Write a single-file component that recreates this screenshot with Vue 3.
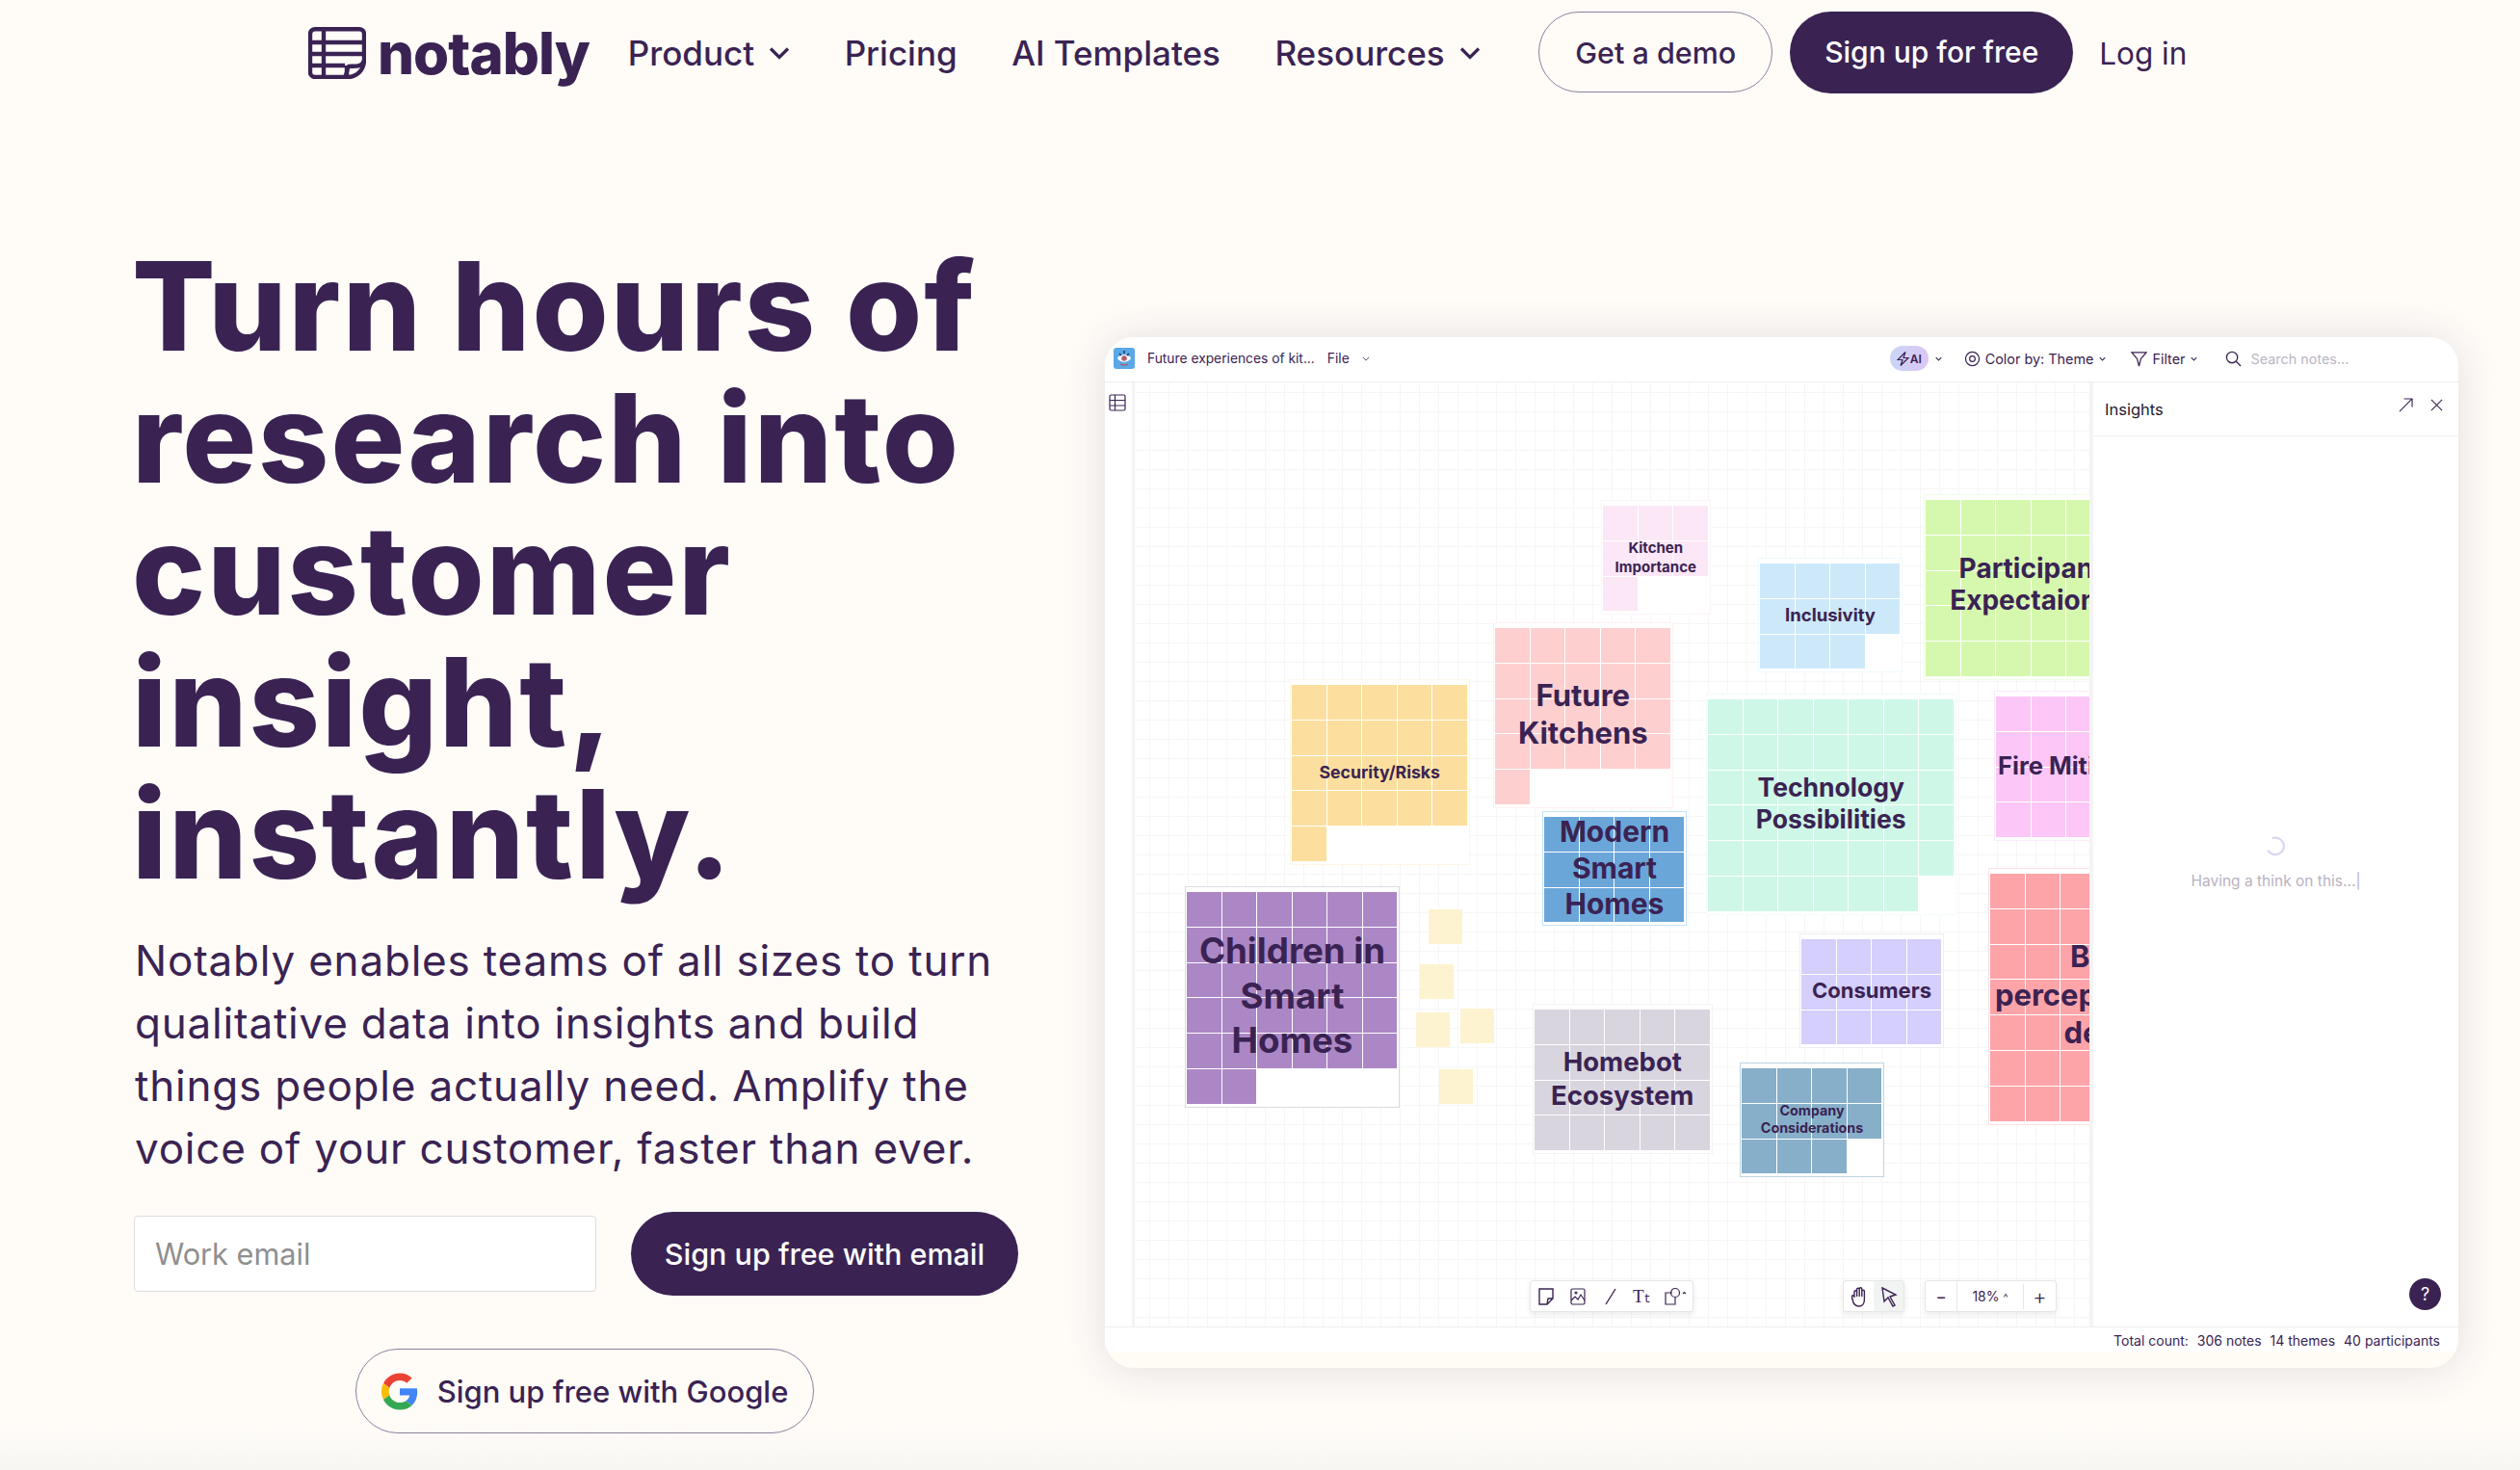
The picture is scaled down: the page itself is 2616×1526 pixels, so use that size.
<template>
  <div class="page">
    <header class="nav">
      <a class="logo">
        <svg class="logo-icon" viewBox="0 0 60 54" fill="none" stroke="#3a2353" stroke-width="4.4">
          <path d="M7 2.2h46a5 5 0 0 1 5 5v27c0 10-7 17.800-17 17.800H7a5 5 0 0 1-5-5V7.200a5 5 0 0 1 5-5z" />
          <path d="M2 16h56M2 28h56M2 40h36M16 2v50M40 40v12" />
          <path d="M38 52c3-4 2-10 4-11 4-1 13 2 16-6" />
        </svg>
        <span>notably</span>
      </a>
      <a class="link">Product
        <svg class="chev" viewBox="0 0 22 14" fill="none" stroke="#3a2353" stroke-width="3.2"><path d="M2 2.500l9 9 9-9" /></svg>
      </a>
      <a class="link">Pricing</a>
      <a class="link">AI Templates</a>
      <a class="link">Resources
        <svg class="chev" viewBox="0 0 22 14" fill="none" stroke="#3a2353" stroke-width="3.2"><path d="M2 2.500l9 9 9-9" /></svg>
      </a>
      <a class="btn-outline demo">Get a demo</a>
      <a class="btn-solid signup">Sign up for free</a>
      <a class="link login">Log in</a>
    </header>

    <main class="hero">
      <section class="copy">
        <h1>Turn hours of research into customer insight, instantly.</h1>
        <p>Notably enables teams of all sizes to turn qualitative data into insights and build things people actually need. Amplify the voice of your customer, faster than ever.</p>
        <div class="signup-row">
          <input class="email" placeholder="Work email" />
          <a class="btn-solid email-btn">Sign up free with email</a>
        </div>
        <a class="btn-outline google">
          <svg viewBox="0 0 48 48" class="g-logo">
            <path fill="#EA4335" d="M24 9.500c3.540 0 6.710 1.220 9.210 3.600l6.850-6.850C35.900 2.380 30.470 0 24 0 14.620 0 6.510 5.380 2.560 13.220l7.980 6.190C12.430 13.720 17.740 9.500 24 9.500z" />
            <path fill="#4285F4" d="M46.980 24.550c0-1.570-.15-3.090-.38-4.550H24v9.020h12.940c-.58 2.960-2.260 5.480-4.780 7.180l7.730 6c4.510-4.180 7.090-10.360 7.090-17.650z" />
            <path fill="#FBBC05" d="M10.530 28.590c-.48-1.450-.76-2.990-.76-4.590s.27-3.140.76-4.590l-7.980-6.190C.92 16.460 0 20.120 0 24c0 3.880.92 7.540 2.560 10.780l7.970-6.190z" />
            <path fill="#34A853" d="M24 48c6.480 0 11.930-2.130 15.890-5.810l-7.730-6c-2.150 1.450-4.920 2.300-8.160 2.300-6.260 0-11.570-4.220-13.470-9.910l-7.980 6.190C6.510 42.620 14.620 48 24 48z" />
          </svg>
          Sign up free with Google
        </a>
      </section>

      <section class="app">
        <div class="app-top">
          <svg class="file-icon" viewBox="0 0 22 22">
            <rect width="22" height="22" rx="3" fill="#5aa9e6" />
            <path d="M4 11c3-5 11-5 14 0-3 5-11 5-14 0z" fill="#fff" />
            <circle cx="11" cy="11" r="2.800" fill="#b45a6a" />
            <path d="M6 6l2 2M16 6l-2 2M11 3v3" stroke="#1f3a66" stroke-width="1.500" />
            <path d="M7 17q4 2 8 0" stroke="#c44" stroke-width="1.200" fill="none" />
          </svg>
          <span class="doc-title">Future experiences of kit...</span>
          <span class="doc-file">File</span>
          <svg class="mini-chev big" viewBox="0 0 10 6" fill="none" stroke="#3a2353" stroke-width="1"><path d="M1 1l4 4 4-4" /></svg>

          <span class="ai-pill">
            <svg viewBox="0 0 14 16" width="14" height="17" fill="none" stroke="#3a2353" stroke-width="1.200"><path d="M9 1L1 9h5l-2 6 8-8H7z" /></svg>
            AI
          </span>
          <svg class="mini-chev ai-chev" viewBox="0 0 10 6" fill="none" stroke="#3a2353" stroke-width="1.500"><path d="M1 1l4 4 4-4" /></svg>
          <svg class="tool-icon eye" viewBox="0 0 18 18" fill="none" stroke="#3a2353" stroke-width="1.300"><circle cx="9" cy="9" r="7.500" /><circle cx="9" cy="9" r="3" /></svg>
          <span class="tool-text">Color by: Theme</span>
          <svg class="mini-chev" viewBox="0 0 10 6" fill="none" stroke="#3a2353" stroke-width="1.500"><path d="M1 1l4 4 4-4" /></svg>
          <svg class="tool-icon funnel" viewBox="0 0 18 18" fill="none" stroke="#3a2353" stroke-width="1.300"><path d="M1 2h16l-6 7-2 8-2-8z" /></svg>
          <span class="tool-text">Filter</span>
          <svg class="mini-chev" viewBox="0 0 10 6" fill="none" stroke="#3a2353" stroke-width="1.500"><path d="M1 1l4 4 4-4" /></svg>
          <svg class="tool-icon search" viewBox="0 0 18 18" fill="none" stroke="#3a2353" stroke-width="1.400"><circle cx="7.500" cy="7.500" r="6" /><path d="M12 12l5 5" /></svg>
          <span class="search-text">Search notes...</span>
        </div>

        <div class="app-main">
          <aside class="side">
            <svg viewBox="0 0 18 18" fill="none" stroke="#3a2353" stroke-width="1.200"><rect x="1" y="1" width="16" height="16" rx="1.500" /><path d="M1 6.500h16M1 12h16M6.500 1v16" /></svg>
          </aside>

          <div class="board">
            <div
              v-for="c in clusters"
              :key="c.name"
              class="cluster"
              :style="{ left: c.x - 1178 + 'px', top: c.y - 396 + 'px', borderColor: c.line }"
            >
              <div class="cells" :style="{ gridTemplateColumns: `repeat(${c.cols}, 35.500px)` }">
                <i v-for="n in c.cols * (c.rows - 1) + c.last" :key="n" :style="{ background: c.color }"></i>
              </div>
              <div
                class="label"
                :style="{ top: c.textY - c.y + 'px', fontSize: c.size + 'px', lineHeight: c.lh + 'px' }"
              >
                <div v-for="l in c.lines" :key="l">{{ l }}</div>
              </div>
            </div>

            <i
              v-for="n in loose"
              :key="n.x"
              class="loose"
              :style="{ left: n.x - 1178 + 'px', top: n.y - 396 + 'px' }"
            ></i>

            <div class="float shapes">
              <svg viewBox="0 0 20 20" fill="none" stroke="#3a2353" stroke-width="1.400"><path d="M3 2h14v10l-6 6H3zM17 12h-5l-1 6" /></svg>
              <svg viewBox="0 0 20 20" fill="none" stroke="#3a2353" stroke-width="1.200"><rect x="3" y="2" width="14" height="16" rx="1.500" /><path d="M3 14l4-4 3 3 3-5 4 6" /><circle cx="8" cy="6" r="1" /></svg>
              <svg viewBox="0 0 20 20" fill="none" stroke="#3a2353" stroke-width="1.400"><path d="M5 18L15 2" /></svg>
              <span class="tt">T<small>t</small></span>
              <svg viewBox="0 0 24 20" fill="none" stroke="#3a2353" stroke-width="1.200"><path d="M9 6H2v12h10v-7" /><circle cx="12" cy="6" r="4.500" /><path d="M20 7l1.500-1.500L23 7" /></svg>
            </div>
            <div class="float modes">
              <span class="mode">
                <svg viewBox="0 0 20 22" fill="none" stroke="#3a2353" stroke-width="1.400"><path d="M5 12V6a1.300 1.300 0 0 1 2.600 0V3.500a1.300 1.300 0 0 1 2.600 0V3a1.300 1.300 0 0 1 2.600 0v2.500a1.300 1.300 0 0 1 2.600 0V14c0 4-2 7-5.500 7S4 19 3 14l-.5-3a1.200 1.200 0 0 1 2.500 0M7.600 6v5M10.200 3.500V11M12.800 5v6" /></svg>
              </span>
              <span class="mode on">
                <svg viewBox="0 0 20 22" fill="none" stroke="#3a2353" stroke-width="1.400"><path d="M3 2l14 7-6 2 5 9-2 1-5-9-4 4z" /></svg>
              </span>
            </div>
            <div class="float zoom">
              <span class="z-btn">−</span>
              <span class="z-val">18% <small>^</small></span>
              <span class="z-btn plus">+</span>
            </div>

            <svg class="pointer" viewBox="0 0 10 16"><path d="M1 1v12l3-3 2 5 2-1-2-5h4z" fill="#111" stroke="#fff" stroke-width=".6" /></svg>
          </div>

          <aside class="panel">
            <div class="panel-head">
              <span>Insights</span>
              <svg viewBox="0 0 16 16" fill="none" stroke="#3a2353" stroke-width="1.200"><path d="M1 15L15 1M6 1h9v9" /></svg>
              <svg viewBox="0 0 16 16" fill="none" stroke="#3a2353" stroke-width="1.200"><path d="M2 2l12 12M14 2L2 14" /></svg>
            </div>
            <div class="thinking">
              <svg viewBox="0 0 20 20" width="22" height="22" fill="none" stroke="#d9d4f2" stroke-width="2"><path d="M6 3a8 8 0 1 1-4 11" /></svg>
              <span>Having a think on this...|</span>
            </div>
            <span class="help">?</span>
          </aside>
        </div>

        <div class="app-foot">
          <span>Total count:</span><span>306 notes</span><span>14 themes</span><span>40 participants</span>
        </div>
      </section>
    </main>
  </div>
</template>

<script setup>
const clusters = [
  { name: 'kitchen', x: 1662, y: 518, cols: 3, rows: 3, last: 1, color: '#fce7f6', line: '#fdf5fb', lines: ['Kitchen', 'Importance'], size: 15, lh: 19.5, textY: 576 },
  { name: 'inclusivity', x: 1825, y: 578, cols: 4, rows: 3, last: 3, color: '#cde9f9', line: '#f0faff', lines: ['Inclusivity'], size: 18.5, lh: 22, textY: 636 },
  { name: 'participants', x: 1997, y: 512, cols: 6, rows: 5, last: 6, color: '#d5f8ae', line: '#f1fde2', lines: ['Participant', 'Expectaions'], size: 28, lh: 33, textY: 605 },
  { name: 'future', x: 1550, y: 645, cols: 5, rows: 5, last: 1, color: '#fecfcf', line: '#fff0f0', lines: ['Future', 'Kitchens'], size: 31, lh: 39, textY: 739 },
  { name: 'security', x: 1339, y: 704, cols: 5, rows: 5, last: 1, color: '#fcdf9e', line: '#fef7e6', lines: ['Security/Risks'], size: 17.7, lh: 24, textY: 800 },
  { name: 'technology', x: 1771, y: 719, cols: 7, rows: 6, last: 6, color: '#cff7e8', line: '#f1fdf9', lines: ['Technology', 'Possibilities'], size: 26.5, lh: 33, textY: 832 },
  { name: 'fire', x: 2070, y: 716, cols: 5, rows: 4, last: 5, color: '#fcc7f7', line: '#fdeafb', lines: ['Fire Mitigation'], size: 25.5, lh: 32, textY: 793 },
  { name: 'modern', x: 1601, y: 841, cols: 4, rows: 3, last: 4, color: '#6ba6d9', line: '#c4e2f7', lines: ['Modern', 'Smart', 'Homes'], size: 30, lh: 37.5, textY: 899 },
  { name: 'brand', x: 2064, y: 900, cols: 7, rows: 7, last: 7, color: '#fda4a9', line: '#fddfe1', lines: ['Brand', 'perceptions and', 'design'], size: 31, lh: 39.5, textY: 1030 },
  { name: 'children', x: 1230, y: 919, cols: 6, rows: 6, last: 2, color: '#ac87c5', line: '#dcdae2', lines: ['Children in', 'Smart', 'Homes'], size: 36.7, lh: 46.5, textY: 1032 },
  { name: 'consumers', x: 1868, y: 968, cols: 4, rows: 3, last: 4, color: '#d4cffc', line: '#eeedf3', lines: ['Consumers'], size: 22, lh: 30, textY: 1026 },
  { name: 'homebot', x: 1591, y: 1041, cols: 5, rows: 4, last: 5, color: '#d8d5df', line: '#f3f2f5', lines: ['Homebot', 'Ecosystem'], size: 27.5, lh: 34.5, textY: 1117 },
  { name: 'company', x: 1806, y: 1102, cols: 4, rows: 3, last: 3, color: '#87afc9', line: '#bed4e2', lines: ['Company', 'Considerations'], size: 14.3, lh: 18, textY: 1160 }
]

const loose = [
  { x: 1483, y: 943 },
  { x: 1474, y: 1000 },
  { x: 1470, y: 1050 },
  { x: 1516, y: 1046 },
  { x: 1494, y: 1109 }
]
</script>

<style scoped>
.page {
  position: relative;
  width: 2616px;
  height: 1526px;
  overflow: hidden;
  background: linear-gradient(#fffcf8 0, #fffcf8 1478px, #f8f6f3 1526px);
  color: #3a2353;
  font-family: Inter, "Liberation Sans", sans-serif;
}
.nav {
  display: flex;
  align-items: center;
  height: 110px;
  padding: 0 0 0 320px;
  box-sizing: border-box;
}
.logo {
  display: flex;
  align-items: center;
  gap: 12px;
  margin-right: 40px;
  font-size: 60px;
  font-weight: 800;
  letter-spacing: -1px;
}
.logo-icon {
  width: 60px;
  height: 54px;
}
.link {
  display: flex;
  align-items: center;
  margin-right: 56.500px;
  font-size: 35px;
  font-weight: 500;
}
.chev {
  width: 22px;
  height: 14px;
  margin-left: 15px;
}
.btn-outline,
.btn-solid {
  display: flex;
  align-items: center;
  justify-content: center;
  box-sizing: border-box;
  border-radius: 50px;
  font-size: 30.500px;
  font-weight: 500;
}
.btn-outline {
  border: 1.500px solid #8d7f9b;
}
.btn-solid {
  background: #3a2353;
  color: #fff;
}
.demo {
  width: 243px;
  height: 84px;
  margin: -2px 0 0 4px;
}
.signup {
  width: 294px;
  height: 85px;
  margin: -2px 0 0 18px;
  font-size: 30px;
}
.login {
  margin: 0 0 0 27px;
  font-size: 31.500px;
  font-weight: 400;
}
.hero {
  display: flex;
}
.copy {
  display: flex;
  flex-direction: column;
  box-sizing: border-box;
  width: 1074px;
  padding: 139px 0 0 137px;
}
h1 {
  margin: 0 0 31px;
  font-size: 128px;
  line-height: 137px;
  font-weight: 800;
  letter-spacing: 2px;
}
p {
  margin: 0 0 33px 3px;
  width: 930px;
  font-size: 44px;
  line-height: 65px;
  letter-spacing: 0.8px;
}
.signup-row {
  display: flex;
  align-items: center;
  gap: 36px;
  margin-left: 2px;
}
.email {
  box-sizing: border-box;
  width: 480px;
  height: 79px;
  padding: 0 21px;
  border: 1.500px solid #ddd;
  border-radius: 4px;
  background: #fff;
  font: 400 30.700px Inter, "Liberation Sans", sans-serif;
}
.email::placeholder {
  color: #8f8f8f;
}
.email-btn {
  width: 402px;
  height: 87px;
}
.google {
  align-self: center;
  gap: 20px;
  width: 476px;
  height: 88px;
  margin-top: 55px;
  margin-left: 3px;
  font-size: 31px;
}
.g-logo {
  width: 38px;
  height: 41px;
}
.app {
  display: flex;
  flex-direction: column;
  box-sizing: border-box;
  width: 1405px;
  height: 1070px;
  margin: 240px 0 0 73px;
  border-radius: 30px;
  overflow: hidden;
  background: #fffcf6;
  box-shadow: 0 2px 44px rgba(60, 35, 60, 0.14);
  font-size: 14px;
}
.app-top {
  display: flex;
  align-items: center;
  flex: none;
  height: 47px;
  padding: 0 0 2px 9px;
  box-sizing: border-box;
  background: #fff;
  border-bottom: 1.500px solid #eeeeee;
}
.file-icon {
  width: 22px;
  height: 22px;
  margin-right: 13px;
}
.doc-title,
.doc-file {
  font-size: 13.800px;
  margin-right: 13px;
}
.mini-chev {
  width: 7px;
  height: 5px;
  margin-left: 6px;
}
.mini-chev.big {
  width: 8px;
  margin-left: 0;
}
.ai-pill {
  display: flex;
  align-items: center;
  justify-content: center;
  box-sizing: border-box;
  width: 40px;
  height: 26px;
  margin-left: 540px;
  border-radius: 13px;
  background: linear-gradient(100deg, #c9d6f8, #dcc5f5);
  font-size: 12px;
  font-weight: 600;
}
.ai-chev {
  margin: 0 23px 0 7px;
}
.tool-icon {
  width: 17px;
  height: 17px;
}
.tool-text {
  margin-left: 5px;
  font-size: 14.400px;
}
.funnel {
  margin-left: 26px;
}
.search {
  margin-left: 29px;
}
.search-text {
  margin-left: 9px;
  font-size: 14.400px;
  color: #bcb6c4;
}
.app-main {
  display: flex;
  flex: none;
  height: 980px;
}
.side {
  flex: none;
  box-sizing: border-box;
  width: 31px;
  padding: 12px 0 0 4px;
  background: #fff;
  border-right: 3px solid #f4f4f4;
}
.side svg {
  display: block;
  width: 18px;
  height: 18px;
}
.board {
  position: relative;
  flex: 1;
  overflow: hidden;
  background-color: #fff;
  background-image:
    linear-gradient(#f6f6f6 1px, transparent 1px),
    linear-gradient(90deg, #f6f6f6 1px, transparent 1px);
  background-size: 20px 20px;
  background-position: 15px 10px;
}
.cluster {
  position: absolute;
  box-sizing: content-box;
  padding: 5px 2px 3px 1px;
  border: 1px solid;
  background: #fff;
}
.cells {
  display: grid;
  grid-auto-rows: 35.800px;
  gap: 1px;
}
.label {
  position: absolute;
  left: 0;
  right: 0;
  transform: translateY(-50%);
  text-align: center;
  white-space: nowrap;
  font-weight: 700;
  color: #3a2353;
}
.loose {
  position: absolute;
  width: 35px;
  height: 36px;
  background: #fdf3d0;
}
.float {
  position: absolute;
  top: 932px;
  display: flex;
  align-items: center;
  box-sizing: border-box;
  height: 33px;
  background: #fff;
  border: 1px solid #e6e6e6;
  border-radius: 3px;
  box-shadow: 0 3px 6px rgba(0, 0, 0, 0.08);
}
.shapes {
  left: 410px;
  width: 170px;
  padding: 0 6px;
  justify-content: space-between;
}
.shapes svg {
  width: 20px;
  height: 20px;
}
.shapes svg:last-child {
  width: 24px;
}
.tt {
  font: 400 19px "Liberation Serif", serif;
}
.tt small {
  font: 400 12px "Liberation Mono", monospace;
}
.modes {
  left: 735px;
  width: 64px;
  overflow: hidden;
}
.mode {
  display: flex;
  align-items: center;
  justify-content: center;
  flex: 1;
  height: 100%;
}
.mode.on {
  background: #f2f3f3;
}
.mode svg {
  width: 20px;
  height: 22px;
}
.zoom {
  left: 820px;
  width: 137px;
}
.z-btn {
  flex: none;
  width: 32px;
  text-align: center;
  font-size: 17px;
}
.z-btn.plus {
  width: 33px;
  border-left: 1px solid #e6e6e6;
  font-size: 22px;
  font-weight: 300;
}
.z-val {
  flex: 1;
  height: 100%;
  line-height: 31px;
  text-align: center;
  border-left: 1px solid #e6e6e6;
  font-size: 14px;
}
.z-val small {
  font-size: 11px;
}
.pointer {
  position: absolute;
  left: 1003px;
  top: 851px;
  width: 11px;
  height: 17px;
}
.panel {
  position: relative;
  flex: none;
  box-sizing: border-box;
  width: 383px;
  border-left: 4px solid #f4f4f4;
  background: #fff;
}
.panel-head {
  display: flex;
  align-items: center;
  box-sizing: border-box;
  height: 56px;
  padding: 0 15px 0 12px;
  border-bottom: 1.500px solid #f0f0f0;
  font-size: 16.500px;
  color: #241a2e;
}
.panel-head span {
  flex: 1;
}
.panel-head svg {
  width: 15px;
  height: 15px;
  margin: -8px 0 0 17px;
}
.thinking {
  display: flex;
  flex-direction: column;
  align-items: center;
  gap: 16px;
  padding-top: 414px;
  font-size: 15.500px;
  color: #b9b2c2;
}
.help {
  position: absolute;
  right: 18px;
  bottom: 17px;
  width: 33px;
  height: 33px;
  border-radius: 50%;
  background: #3a2353;
  color: #fff;
  text-align: center;
  line-height: 33px;
  font-size: 18px;
}
.app-foot {
  display: flex;
  justify-content: flex-end;
  align-items: center;
  flex: none;
  gap: 9px;
  height: 26px;
  padding: 2px 19px 0 0;
  box-sizing: border-box;
  background: #fff;
  border-top: 1.500px solid #eeeeee;
  font-size: 14px;
}
</style>
